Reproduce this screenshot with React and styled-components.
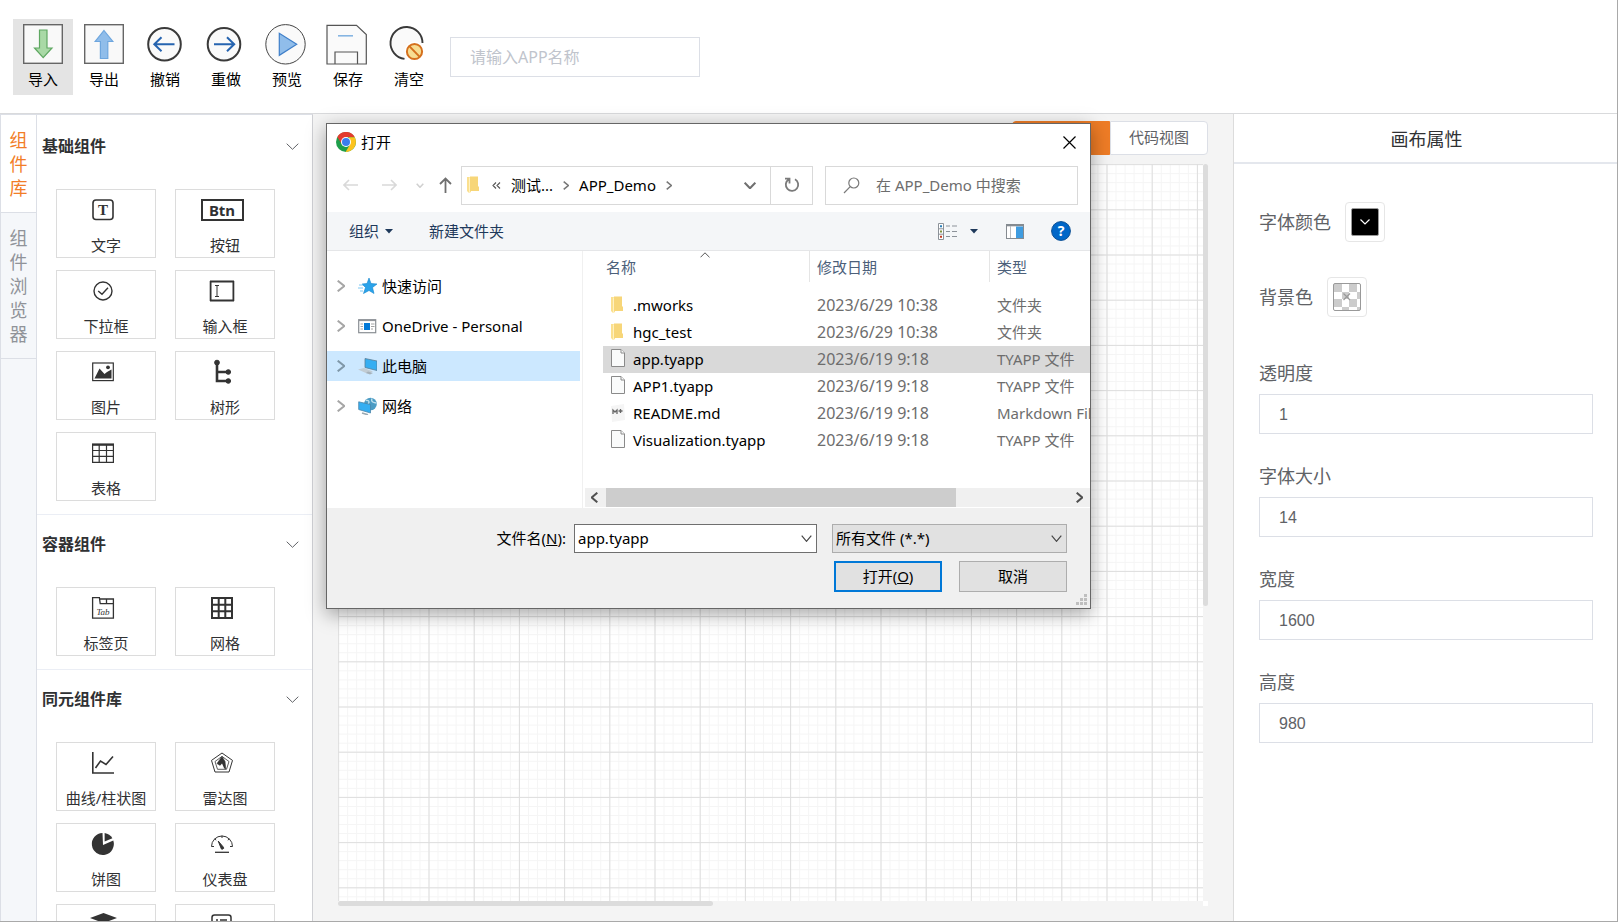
import React from "react";
import styled, { createGlobalStyle } from "styled-components";

const GlobalStyle = createGlobalStyle`
  * {
    box-sizing: border-box;
  }
  body {
    margin: 0;
    color: #303133;
    background: #ffffff;
    font-family: "Noto Sans", "Noto Sans CJK SC", sans-serif;
    font-size: 15px;
    line-height: 22px;
  }
  button, input, select {
    margin: 0;
    padding: 0;
    border: 0;
    border-radius: 0;
    background: none;
    color: inherit;
    font: inherit;
    outline: none;
  }
  svg {
    display: block;
    flex: none;
  }
`;

const Page = styled.div`
  display: flex;
  flex-direction: column;
  height: 100vh;
  overflow: hidden;
  border-right: 1px solid #a9a9a9;
  border-bottom: 1px solid #a9a9a9;
`;

/* top bar */
const TopBar = styled.header`
  display: flex;
  align-items: flex-start;
  flex: none;
  height: 114px;
  padding: 19px 13px 0;
  border-bottom: 1px solid #d9dadc;
`;
const Tools = styled.div`
  display: flex;
  gap: 1px;
`;
const ToolButton = styled.button`
  display: flex;
  flex-direction: column;
  align-items: center;
  gap: 2px;
  width: 60px;
  height: 76px;
  padding-top: 3px;
  color: #000000;
  background: ${(p) => (p.$active ? "#e4e4e4" : "transparent")};
`;
const AppName = styled.input`
  width: 250px;
  height: 40px;
  margin: 18px 0 0 11px;
  padding: 0 19px;
  border: 1px solid #dcdfe6;
  font-size: 16px;
  &::placeholder {
    color: #c0c4cc;
    opacity: 1;
  }
`;

const Workspace = styled.div`
  display: flex;
  flex: 1;
  min-height: 0;
`;

/* left side */
const Rail = styled.nav`
  display: flex;
  flex-direction: column;
  flex: none;
  width: 37px;
  border: 1px solid #dcdfe6;
  border-bottom: 0;
  background: #f5f7fa;
`;
const RailTab = styled.button`
  width: 100%;
  padding: 13px 8px 12px;
  border-bottom: 1px solid #dcdfe6;
  background: ${(p) => (p.$active ? "#ffffff" : "transparent")};
  color: ${(p) => (p.$active ? "#f27d27" : "#909399")};
  font-size: 18px;
  line-height: 24px;
`;
const Library = styled.aside`
  flex: none;
  width: 276px;
  padding-top: 2px;
  overflow: hidden;
  border-top: 1px solid #dcdfe6;
  border-right: 1px solid #cfd0d4;
`;
const Section = styled.section`
  padding-bottom: 13px;
  border-bottom: 1px solid #ebeef5;
`;
const SectionTitle = styled.button`
  display: flex;
  align-items: center;
  justify-content: space-between;
  width: 100%;
  height: 60px;
  padding: 0 13px 2px 5px;
  font-size: 16px;
  font-weight: 700;
`;
const Cards = styled.div`
  display: grid;
  grid-template-columns: 100px 100px;
  gap: 12px 19px;
  padding: 12px 19px 0;
`;
const Card = styled.button`
  display: flex;
  flex-direction: column;
  align-items: center;
  gap: 12px;
  height: 69px;
  padding-top: 8px;
  border: 1px solid #dcdcdc;
  white-space: nowrap;
`;
const CardIcon = styled.span`
  display: flex;
  align-items: center;
  justify-content: center;
  height: 24px;
  margin-right: 6px;
`;
const BtnGlyph = styled.span`
  width: 43px;
  height: 22px;
  border: 2px solid #333333;
  font-weight: 700;
  line-height: 18px;
  text-align: center;
`;

/* canvas */
const Stage = styled.main`
  display: flex;
  flex: 1;
  flex-direction: column;
  min-width: 0;
  padding: 7px 25px 15px;
  background: #f4f4f4;
`;
const ViewTabs = styled.div`
  display: flex;
  align-self: flex-end;
`;
const ViewTab = styled.button`
  width: 98px;
  height: 34px;
  padding-bottom: 2px;
  border: 1px solid ${(p) => (p.$active ? "#ee7c26" : "#dcdfe6")};
  border-radius: ${(p) => (p.$active ? "4px 0 0 4px" : "0 4px 4px 0")};
  background: ${(p) => (p.$active ? "#ee7c26" : "#ffffff")};
  color: #606266;
`;
const Board = styled.div`
  display: grid;
  flex: 1;
  grid-template-columns: minmax(0, 1fr) 5px;
  grid-template-rows: minmax(0, 1fr) 5px;
  min-height: 0;
  margin-top: 9px;
`;
const Grid = styled.svg`
  width: 100%;
  height: 100%;
  background: #ffffff;
`;
const Thumb = styled.div`
  width: ${(p) => p.$w};
  height: ${(p) => p.$h};
  border-radius: 3px;
  background: #dcdcdc;
`;
const Corner = styled.div`
  background: #ffffff;
`;

/* right side */
const Props = styled.aside`
  flex: none;
  width: 384px;
  border-left: 1px solid #dcdcdc;
  color: #606266;
  font-size: 18px;
`;
const PropsTitle = styled.h2`
  margin: 0;
  padding: 2px 0 0 2px;
  border-bottom: 2px solid #e4e7ed;
  color: #303133;
  font-size: 18px;
  font-weight: 400;
  line-height: 46px;
  text-align: center;
`;
const PropsForm = styled.form`
  display: flex;
  flex-direction: column;
  padding: 38px 24px 38px 25px;
`;
const ColorRow = styled.div`
  display: flex;
  align-items: center;
  gap: 14px;
  margin-bottom: 35px;
`;
const Swatch = styled.button`
  display: flex;
  align-items: center;
  justify-content: center;
  width: 40px;
  height: 40px;
  border: 1px solid #e6e6e6;
  border-radius: 4px;
`;
const Field = styled.div`
  display: flex;
  flex-direction: column;
  margin: 1px 0 21px;
  line-height: 41px;
`;
const FieldInput = styled.input`
  height: 40px;
  padding: 0 19px;
  border: 1px solid #dcdfe6;
  font-family: "Liberation Sans", sans-serif;
  font-size: 16px;
`;

/* file dialog */
const Dialog = styled.div`
  position: absolute;
  top: 123px;
  left: 326px;
  display: flex;
  flex-direction: column;
  width: 765px;
  border: 1px solid #666666;
  background: #ffffff;
  color: #000000;
  box-shadow: 0 5px 18px rgba(0, 0, 0, 0.36);
`;
const TitleBar = styled.div`
  display: flex;
  align-items: center;
  gap: 5px;
  height: 36px;
  padding: 0 14px 0 9px;
`;
const CloseButton = styled.button`
  margin-left: auto;
`;
const NavBar = styled.div`
  display: flex;
  align-items: center;
  height: 52px;
  padding: 0 12px 2px 16px;
`;
const NavButtons = styled.div`
  display: flex;
  align-items: center;
  width: 118px;
`;
const Address = styled.div`
  display: flex;
  align-items: center;
  flex: 1;
  height: 39px;
  border: 1px solid #d9d9d9;
`;
const Crumbs = styled.div`
  display: flex;
  align-items: center;
  gap: 10px;
  flex: 1;
  padding-left: 4px;
`;
const Refresh = styled.button`
  display: flex;
  align-items: center;
  justify-content: center;
  width: 42px;
  height: 37px;
  margin-left: 14px;
  border-left: 1px solid #d9d9d9;
`;
const Search = styled.label`
  display: flex;
  align-items: center;
  gap: 16px;
  width: 253px;
  height: 39px;
  margin-left: 12px;
  padding: 0 17px;
  border: 1px solid #d9d9d9;
`;
const SearchInput = styled.input`
  flex: 1;
  min-width: 0;
  &::placeholder {
    color: #6d6d6d;
    opacity: 1;
  }
`;
const CommandBar = styled.div`
  display: flex;
  align-items: center;
  height: 39px;
  padding: 0 19px 0 22px;
  border-bottom: 1px solid #e5e6e8;
  background: #f4f6f8;
  color: #1e395b;
`;
const Command = styled.button`
  display: flex;
  align-items: center;
  gap: 6px;
  margin-right: 36px;
`;
const ViewTools = styled.div`
  display: flex;
  align-items: center;
  margin-left: auto;
`;
const IconButton = styled.button`
  display: flex;
  margin-left: ${(p) => p.$gap || 0}px;
`;
const Panes = styled.div`
  display: flex;
  height: 257px;
`;
const Tree = styled.div`
  display: flex;
  flex-direction: column;
  gap: 10px;
  width: 256px;
  padding: 20px 2px 0 0;
  border-right: 1px solid #f0f0f0;
`;
const TreeItem = styled.button`
  display: flex;
  align-items: center;
  height: 30px;
  padding-left: 10px;
  background: ${(p) => (p.$active ? "#cce8ff" : "transparent")};
  svg + svg {
    margin: 0 5px 0 13px;
  }
`;
const Files = styled.div`
  display: flex;
  flex: 1;
  flex-direction: column;
  min-width: 0;
  padding-left: 2px;
`;
const TableClip = styled.div`
  position: relative;
  flex: 1;
  overflow: hidden;
  padding-left: 18px;
`;
const SortMark = styled.svg`
  position: absolute;
  top: 1px;
  left: 115px;
`;
const Table = styled.table`
  width: 100%;
  border-collapse: separate;
  border-spacing: 0;
  table-layout: fixed;
  white-space: nowrap;
  tbody::before {
    content: "";
    display: block;
    height: 10px;
  }
`;
const Th = styled.th`
  width: ${(p) => p.$w};
  height: 31px;
  padding: 1px 0 0 ${(p) => p.$pad}px;
  border-right: ${(p) => (p.$last ? 0 : 1)}px solid #e5e5e5;
  color: #4c607a;
  font-weight: 400;
  text-align: left;
`;
const Row = styled.tr`
  background: ${(p) => (p.$active ? "#d9d9d9" : "transparent")};
`;
const Td = styled.td`
  height: 27px;
  padding: 0 0 2px 7px;
  color: ${(p) => (p.$name ? "#000000" : "#6d6d6d")};
  font-size: ${(p) => (p.$date ? 16 : 15)}px;
`;
const FileName = styled.span`
  display: flex;
  align-items: center;
  gap: 7px;
`;
const HScroll = styled.div`
  display: flex;
  align-items: center;
  height: 20px;
  border-bottom: 1px solid #ffffff;
  background: #f0f0f0;
`;
const HThumb = styled.div`
  width: 350px;
  height: 19px;
  margin: 0 auto 0 8px;
  background: #cdcdcd;
`;
const Footer = styled.div`
  display: flex;
  flex-direction: column;
  gap: 8px;
  height: 100px;
  padding: 16px 23px 0 0;
  background: #f0f0f0;
`;
const FooterRow = styled.div`
  display: flex;
  align-items: center;
  justify-content: flex-end;
  gap: ${(p) => p.$gap}px;
  label {
    padding-bottom: 2px;
  }
`;
const Combo = styled.div`
  display: flex;
  align-items: center;
  width: ${(p) => p.$w}px;
  height: 29px;
  padding-right: 4px;
  border: 1px solid ${(p) => (p.$grey ? "#adadad" : "#6f6f6f")};
  background: ${(p) => (p.$grey ? "#e1e1e1" : "#ffffff")};
  input, select {
    flex: 1;
    min-width: 0;
    height: 27px;
    padding: 0 0 2px 3px;
    appearance: none;
  }
`;
const DialogButton = styled.button`
  width: 108px;
  height: 31px;
  padding-bottom: 2px;
  border: ${(p) => (p.$primary ? "2px solid #0078d7" : "1px solid #adadad")};
  background: #e1e1e1;
`;
const Grip = styled.svg`
  position: absolute;
  right: 2px;
  bottom: 2px;
`;

const Chevron = ({ w = 12, h = 7, color = "#606266", stroke = 1, dir = "down" }) => {
  const d = {
    down: `M.7 .7L${w / 2} ${h - 0.7}L${w - 0.7} .7`,
    up: `M.7 ${h - 0.7}L${w / 2} .7L${w - 0.7} ${h - 0.7}`,
    right: `M.7 .7L${w - 0.7} ${h / 2}L.7 ${h - 0.7}`,
    left: `M${w - 0.7} .7L.7 ${h / 2}L${w - 0.7} ${h - 0.7}`,
  }[dir];
  return (
    <svg width={w} height={h} fill="none" stroke={color} strokeWidth={stroke}>
      <path d={d} />
    </svg>
  );
};

const Triangle = () => (
  <svg width="8" height="5" fill="#1e395b">
    <path d="M0 0H8L4 4.5Z" />
  </svg>
);

const toolIcons = {
  导入: (
    <>
      <rect x="2.7" y="2.7" width="38.6" height="38.6" fill="#f9f9f9" stroke="#666" strokeWidth="1.4" />
      <path d="M18.5 8H26V26H31L22.2 35.7L13.5 26H18.5Z" fill="#a9d9a6" stroke="#5fa862" strokeWidth="1.2" />
    </>
  ),
  导出: (
    <>
      <rect x="2.7" y="2.7" width="38.6" height="38.6" fill="#f9f9f9" stroke="#666" strokeWidth="1.4" />
      <path d="M22 8.5L30.8 19.5H25.8V36.5H18.4V19.5H13.2Z" fill="#90bdea" stroke="#6ea6de" strokeWidth="1.2" />
    </>
  ),
  撤销: (
    <>
      <circle cx="21.5" cy="22.3" r="16.3" fill="#fafafa" stroke="#3a3a3a" strokeWidth="2" />
      <path d="M31.5 22.3H11M18.5 15.3L11.3 22.3L18.5 29.3" fill="none" stroke="#2664b0" strokeWidth="2" />
    </>
  ),
  重做: (
    <>
      <circle cx="20" cy="22.3" r="16.3" fill="#fafafa" stroke="#3a3a3a" strokeWidth="2" />
      <path d="M10 22.3H30.5M23 15.3L30.2 22.3L23 29.3" fill="none" stroke="#2664b0" strokeWidth="2" />
    </>
  ),
  预览: (
    <>
      <circle cx="20.5" cy="22.3" r="19.7" fill="#fafafa" stroke="#444" strokeWidth="1" />
      <path d="M14.3 11.3V33.3L31.7 22.3Z" fill="#90bdea" stroke="#3f7fc9" strokeWidth="1.2" />
    </>
  ),
  保存: (
    <>
      <path d="M1 3.4H30.5L40.3 12.5V42H1Z" fill="#fafafa" stroke="#555" strokeWidth="1.2" />
      <path d="M9 42V30H31.5V42" fill="none" stroke="#555" strokeWidth="1.2" />
      <path d="M12 13.8H27" stroke="#86b5e2" strokeWidth="1.6" />
    </>
  ),
  清空: (
    <>
      <circle cx="19.5" cy="21" r="16" fill="#fafafa" />
      <path d="M35.5 21A16 16 0 1 0 17.5 36.9" fill="none" stroke="#3a3a3a" strokeWidth="1.9" />
      <circle cx="27.5" cy="29.5" r="10" fill="#fff" />
      <circle cx="27.5" cy="29.5" r="7.6" fill="#f7dd92" stroke="#d5701d" strokeWidth="2" />
      <path d="M22.3 24.1L32.7 34.9" stroke="#d5701d" strokeWidth="2" />
    </>
  ),
};

const cardIcons = {
  text: (
    <>
      <rect x="2" y="2" width="20" height="19.5" rx="3" fill="none" stroke="#333" strokeWidth="1.6" />
      <text x="12" y="17" fontFamily="Liberation Serif, serif" fontSize="15" fontWeight="700" textAnchor="middle">T</text>
    </>
  ),
  select: (
    <g fill="none" stroke="#333" strokeWidth="1.4">
      <circle cx="12" cy="12" r="9" />
      <path d="M7.2 12L11 15.3L17 8.8" />
    </g>
  ),
  input: (
    <g fill="none" stroke="#333">
      <path d="M0 2.5H24M0 21.5H24M.6 2V22M23.4 2V22" strokeWidth="1.8" />
      <path d="M5 6.5H9M5 17.5H9M7 6.5V17.5" strokeWidth="1" />
    </g>
  ),
  image: (
    <>
      <rect x="1.7" y="3" width="20.6" height="17.6" fill="none" stroke="#333" strokeWidth="1.2" />
      <path d="M3.5 18.5L8.5 8.5L13.5 14L16 12L20.5 9.5V18.5Z" fill="#333" />
      <circle cx="17" cy="7.3" r="1.9" fill="#333" />
    </>
  ),
  tree: (
    <g fill="#333" stroke="#333">
      <path d="M7 2V21H18M7 12H18" fill="none" strokeWidth="2.6" />
      <circle cx="7" cy="2.6" r="2.4" />
      <circle cx="18.3" cy="12" r="2.3" />
      <circle cx="18.3" cy="21" r="2.3" />
    </g>
  ),
  table: (
    <g fill="none" stroke="#333" strokeWidth="1.2">
      <path d="M1 3.6H23" strokeWidth="2.4" />
      <path d="M1.6 3V21.4H22.4V3M1 9.5H23M1 15.4H23M8.2 3V21.4M15.5 3V21.4" />
    </g>
  ),
  tab: (
    <>
      <path d="M1.6 22.2V1.6H8.4L9.2 7.6H22.4V22.2ZM9 3H22.4V7.6M15.5 3V7.6" fill="none" stroke="#333" strokeWidth="1.3" />
      <text x="12" y="18.5" fontFamily="Liberation Serif, serif" fontSize="9" fontStyle="italic" textAnchor="middle">Tab</text>
    </>
  ),
  grid: (
    <path d="M2 2H22V22H2ZM2 8.7H22M2 15.3H22M8.7 2V22M15.3 2V22" fill="none" stroke="#333" strokeWidth="2" />
  ),
  line: (
    <path d="M1.8 1V22H23M4.5 17L9.5 10L15 13.5L22 5.5" fill="none" stroke="#333" strokeWidth="1.6" />
  ),
  radar: (
    <g fill="none" stroke="#333">
      <path d="M12 2L22.5 9.4L19 21H5L1.5 9.4Z" strokeWidth="1" />
      <path d="M12 5.4L19 10.5L16.5 18.3H7.5L5 10.5Z" strokeWidth=".8" />
      <path d="M12 5.5L15 10.5L15.8 18L7 12.5Z" fill="#333" strokeWidth=".6" />
      <path d="M12 12.5L14 17L8.5 16.5Z" fill="#fff" stroke="none" />
    </g>
  ),
  pie: (
    <>
      <path d="M11.5 1A11 11 0 1 0 22.3 8.6L12 13Z" fill="#333" />
      <path d="M13.6 1V9.5L21.4 6.3A11 11 0 0 0 13.6 1Z" fill="#333" />
    </>
  ),
  gauge: (
    <g fill="none" stroke="#333" strokeWidth="1">
      <path d="M1.5 14.5A10.5 10.5 0 1 1 22.5 14.5M1.5 14.5H4M20 14.5H22.5M12 3.7V6M4.6 6.8L6.2 8.2M19.4 6.8L17.8 8.2" />
      <path d="M8.2 9L13.4 15.2A1.3 1.3 0 1 1 11 16Z" fill="#333" />
      <path d="M5 20.3H19" strokeWidth="1.3" />
    </g>
  ),
  layers: <path d="M-1 5L12.5 0L26 5L12.5 10ZM0 10L12.5 15L25 10V13L12.5 18L0 13Z" fill="#333" />,
  list: (
    <g fill="none" stroke="#333" strokeWidth="1.5">
      <rect x="2" y="2" width="19" height="19" rx="2.5" />
      <path d="M6 7H8M10 7H17M6 11H8M10 11H17" />
    </g>
  ),
};

const sections = [
  {
    title: "基础组件",
    cards: [
      ["text", "文字"],
      ["btn", "按钮"],
      ["select", "下拉框"],
      ["input", "输入框"],
      ["image", "图片"],
      ["tree", "树形"],
      ["table", "表格"],
    ],
  },
  {
    title: "容器组件",
    cards: [
      ["tab", "标签页"],
      ["grid", "网格"],
    ],
  },
  {
    title: "同元组件库",
    cards: [
      ["line", "曲线/柱状图"],
      ["radar", "雷达图"],
      ["pie", "饼图"],
      ["gauge", "仪表盘"],
      ["layers", ""],
      ["list", ""],
    ],
  },
];

const fields = [
  { id: "opacity", label: "透明度", value: "1" },
  { id: "fontSize", label: "字体大小", value: "14" },
  { id: "width", label: "宽度", value: "1600" },
  { id: "height", label: "高度", value: "980" },
];

const files = [
  { name: ".mworks", date: "2023/6/29 10:38", type: "文件夹", icon: "folder" },
  { name: "hgc_test", date: "2023/6/29 10:38", type: "文件夹", icon: "folder" },
  { name: "app.tyapp", date: "2023/6/19 9:18", type: "TYAPP 文件", icon: "file", active: true },
  { name: "APP1.tyapp", date: "2023/6/19 9:18", type: "TYAPP 文件", icon: "file" },
  { name: "README.md", date: "2023/6/19 9:18", type: "Markdown File", icon: "md" },
  { name: "Visualization.tyapp", date: "2023/6/19 9:18", type: "TYAPP 文件", icon: "file" },
];

const fileIcons = {
  folder: (
    <svg width="16" height="20">
      <path d="M1 2H5V17L3 18L1 16Z" fill="#fbe08f" />
      <path d="M4 1.5H12V11L13 12V16H4Z" fill="#f7d679" />
      <path d="M4 2V18L3 17.5V3Z" fill="#fff1c0" />
    </svg>
  ),
  file: (
    <svg width="16" height="20" fill="#fafbfb" stroke="#8a8a8a">
      <path d="M1.5 .5H11L14.5 4V17.5H1.5Z" />
      <path d="M11 .5V4H14.5" />
    </svg>
  ),
  md: (
    <svg width="16" height="20">
      <path d="M1 3L14 1L15 17L2 19Z" fill="#f5f5f5" />
      <path d="M3 11V7L5 9L7 7V11M10.5 6V10M8.5 8H12.5" fill="none" stroke="#666" strokeWidth="1.3" />
    </svg>
  ),
};

const places = [
  {
    name: "快速访问",
    icon: (
      <>
        <path d="M11 1L13 6.5L19 7L14.5 10.5L16 16.5L11 13.5L5.5 16.5L7.5 10.5L4 7L9 6.5Z" fill="#2aa3ea" stroke="#1285cc" strokeWidth=".6" />
        <path d="M1 8H5M0 11H5M2 14H5" stroke="#7cc8f4" />
      </>
    ),
  },
  {
    name: "OneDrive - Personal",
    icon: (
      <>
        <rect x=".7" y="2.7" width="17" height="13" fill="#fff" stroke="#8a8f94" strokeWidth="1.2" />
        <path d="M1 3.6H18" stroke="#8a8f94" />
        <rect x="6" y="6" width="6" height="7" fill="#0078d7" />
        <path d="M2.5 7H5M2.5 9.5H5M2.5 12H5M13 7H16.5M13 9.5H16.5M13 12H15" stroke="#999" strokeWidth=".9" />
      </>
    ),
  },
  {
    name: "此电脑",
    active: true,
    icon: (
      <>
        <path d="M7 1.5L19 4V13.5L7 10.5Z" fill="#35aef2" stroke="#5c7e96" strokeWidth=".8" />
        <path d="M0 12.5L6 11L15 14.5L9 16.5Z" fill="#c2ccd3" />
        <path d="M10 14.5L15 16L12 17.5L8 16Z" fill="#a5b1b9" />
      </>
    ),
  },
  {
    name: "网络",
    icon: (
      <>
        <circle cx="12.5" cy="7" r="6.3" fill="#4c9cc4" />
        <path d="M8 3.5C11 3 12 5 10 7M14 1.5C12.5 5 16 6 18.5 6" fill="none" stroke="#bfe0ee" strokeWidth="1.3" />
        <path d="M.7 4.8L12.5 7.5V16L.7 12.5Z" fill="#35aef2" stroke="#4d86aa" strokeWidth=".8" />
        <path d="M4 16L10 17.8" stroke="#9aa9b2" strokeWidth="1.6" />
      </>
    ),
  },
];

const lines = (count, step) =>
  Array.from({ length: count }, (_, i) => {
    const p = (0.6 + i * step).toFixed(2);
    return `M${p} 0V3000M0 ${p}H3000`;
  }).join("");

const ChromeLogo = () => (
  <svg width="20" height="20" viewBox="0 0 20 20">
    <circle cx="10" cy="10" r="10" fill="#1e9e4a" />
    <path d="M1.3 5A10 10 0 0 1 18.7 5H10L6 12.5Z" fill="#e33b2e" />
    <path d="M18.7 5.3A10 10 0 0 1 9.6 20L14 12.4L13 5.3Z" fill="#fcc31e" />
    <circle cx="10" cy="10" r="5" fill="#fff" />
    <circle cx="10" cy="10" r="4" fill="#3b7ded" />
  </svg>
);

const OpenDialog = () => (
  <Dialog role="dialog" aria-label="打开">
    <TitleBar>
      <ChromeLogo />
      <span>打开</span>
      <CloseButton aria-label="关闭">
        <svg width="13" height="13" stroke="#000" strokeWidth="1.2">
          <path d="M.5 .5L12.5 12.5M12.5 .5L.5 12.5" />
        </svg>
      </CloseButton>
    </TitleBar>
    <NavBar>
      <NavButtons>
        <IconButton aria-label="后退">
          <svg width="15" height="12" fill="none" stroke="#d9d9d9" strokeWidth="1.6">
            <path d="M15 6H1M6 1L1 6L6 11" />
          </svg>
        </IconButton>
        <IconButton $gap={24} aria-label="前进">
          <svg width="15" height="12" fill="none" stroke="#d9d9d9" strokeWidth="1.6">
            <path d="M0 6H14M9 1L14 6L9 11" />
          </svg>
        </IconButton>
        <IconButton $gap={19} aria-label="最近位置">
          <Chevron w={8} h={5} color="#d0d0d0" stroke={1.5} />
        </IconButton>
        <IconButton $gap={15} aria-label="上移">
          <svg width="13" height="16" fill="none" stroke="#6f6f6f" strokeWidth="1.8">
            <path d="M6.5 16V1.5M1 7L6.5 1.5L12 7" />
          </svg>
        </IconButton>
      </NavButtons>
      <Address>
        <Crumbs>
          {fileIcons.folder}
          <svg width="9" height="7" fill="none" stroke="#555" strokeWidth="1.1">
            <path d="M4 .5L1 3.5L4 6.5M8 .5L5 3.5L8 6.5" />
          </svg>
          <span>测试...</span>
          <Chevron w={6} h={9} dir="right" color="#777" stroke={1.5} />
          <span>APP_Demo</span>
          <Chevron w={6} h={9} dir="right" color="#777" stroke={1.5} />
        </Crumbs>
        <Chevron w={12} h={7} color="#6f6f6f" stroke={2} />
        <Refresh aria-label="刷新">
          <svg width="16" height="16" fill="none" stroke="#7a7a7a" strokeWidth="1.8">
            <path d="M11 2.2A6.2 6.2 0 1 1 4.5 2.5M1 1.7H5.5V6.5" />
          </svg>
        </Refresh>
      </Address>
      <Search>
        <svg width="17" height="17" fill="none" stroke="#7a7a7a" strokeWidth="1.2">
          <circle cx="10.8" cy="6" r="5" />
          <path d="M7.2 9.6L1 16" />
        </svg>
        <SearchInput placeholder="在 APP_Demo 中搜索" />
      </Search>
    </NavBar>
    <CommandBar>
      <Command>组织 <Triangle /></Command>
      <Command>新建文件夹</Command>
      <ViewTools>
        <IconButton aria-label="更改视图">
          <svg width="19" height="17" fill="#fff" stroke="#8c9299">
            <path d="M.5 .5H5.5V16.5H.5ZM.5 5.8H5.5M.5 11.2H5.5" />
            <path d="M8 3H12M14 3H19M8 8.5H12M14 8.5H19M8 13.5H12M14 13.5H19" />
            <path d="M2 3.2H4" stroke="#2b7fb8" strokeWidth="2" />
            <path d="M2 8.5H4" stroke="#7d8f3c" strokeWidth="2" />
            <path d="M2 13.8H4" stroke="#c23b22" strokeWidth="2" />
          </svg>
        </IconButton>
        <IconButton $gap={13} aria-label="更多选项">
          <Triangle />
        </IconButton>
        <IconButton $gap={28} aria-label="预览窗格">
          <svg width="18" height="15">
            <rect x=".5" y=".5" width="17" height="14" fill="#fff" stroke="#858b91" />
            <path d="M0 1.3H18" stroke="#858b91" strokeWidth="2" />
            <path d="M4.5 2V14" stroke="#b9bdc1" />
            <rect x="10" y="2.5" width="7" height="11.5" fill="#3f9ce0" />
          </svg>
        </IconButton>
        <IconButton $gap={27} aria-label="帮助">
          <svg width="20" height="20">
            <circle cx="10" cy="10" r="9.4" fill="#0067c8" stroke="#0b4f93" />
            <text x="10" y="15" fill="#fff" fontSize="14" fontWeight="700" textAnchor="middle">?</text>
          </svg>
        </IconButton>
      </ViewTools>
    </CommandBar>
    <Panes>
      <Tree>
        {places.map((p) => (
          <TreeItem key={p.name} $active={p.active}>
            <Chevron w={8} h={12} dir="right" color={p.active ? "#7f97a8" : "#a6a6a6"} stroke={2} />
            <svg width="19" height="18">{p.icon}</svg>
            {p.name}
          </TreeItem>
        ))}
      </Tree>
      <Files>
        <TableClip>
          <SortMark width="10" height="6" fill="none" stroke="#555">
            <path d="M.5 5.3L5 .8L9.5 5.3" />
          </SortMark>
          <Table>
            <thead>
              <tr>
                <Th $w="207px" $pad={3}>名称</Th>
                <Th $w="180px" $pad={7}>修改日期</Th>
                <Th $w="auto" $pad={7} $last>类型</Th>
              </tr>
            </thead>
            <tbody>
              {files.map((f) => (
                <Row key={f.name} $active={f.active}>
                  <Td $name>
                    <FileName>
                      {fileIcons[f.icon]}
                      {f.name}
                    </FileName>
                  </Td>
                  <Td $date>{f.date}</Td>
                  <Td>{f.type}</Td>
                </Row>
              ))}
            </tbody>
          </Table>
        </TableClip>
        <HScroll>
          <IconButton $gap={6} aria-label="向左滚动">
            <Chevron w={7} h={11} dir="left" color="#505050" stroke={2} />
          </IconButton>
          <HThumb />
          <IconButton aria-label="向右滚动">
            <Chevron w={7} h={11} dir="right" color="#505050" stroke={2} />
          </IconButton>
          <IconButton as="span" $gap={7} />
        </HScroll>
      </Files>
    </Panes>
    <Footer>
      <FooterRow $gap={15}>
        <FooterRow $gap={8}>
          <label htmlFor="fileName">文件名(<u>N</u>):</label>
          <Combo $w={243}>
            <input id="fileName" defaultValue="app.tyapp" />
            <Chevron w={11} h={7} color="#444" stroke={1.2} />
          </Combo>
        </FooterRow>
        <Combo $w={235} $grey>
          <select aria-label="文件类型">
            <option>所有文件 (*.*)</option>
          </select>
          <Chevron w={11} h={7} color="#444" stroke={1.2} />
        </Combo>
      </FooterRow>
      <FooterRow $gap={17}>
        <DialogButton $primary>打开(<u>O</u>)</DialogButton>
        <DialogButton>取消</DialogButton>
      </FooterRow>
    </Footer>
    <Grip width="12" height="12" fill="#bfbfbf">
      <path d="M8 0h3v3h-3zM8 4h3v3h-3zM8 8h3v3h-3zM4 4h3v3h-3zM4 8h3v3h-3zM0 8h3v3h-3z" />
    </Grip>
  </Dialog>
);

const App = () => {
  return (
    <Page>
      <GlobalStyle />
      <TopBar>
        <Tools>
          {Object.keys(toolIcons).map((name) => (
            <ToolButton key={name} $active={name === "导入"}>
              <svg width="44" height="44">{toolIcons[name]}</svg>
              {name}
            </ToolButton>
          ))}
        </Tools>
        <AppName placeholder="请输入APP名称" aria-label="APP名称" />
      </TopBar>
      <Workspace>
        <Rail>
          <RailTab $active>组件库</RailTab>
          <RailTab>组件浏览器</RailTab>
        </Rail>
        <Library>
          {sections.map((s) => (
            <Section key={s.title}>
              <SectionTitle>
                {s.title}
                <Chevron w={13} h={7} />
              </SectionTitle>
              <Cards>
                {s.cards.map(([icon, label]) => (
                  <Card key={icon}>
                    <CardIcon>
                      {icon === "btn" ? (
                        <BtnGlyph>Btn</BtnGlyph>
                      ) : (
                        <svg width="24" height="24" overflow="visible" fill="#333">{cardIcons[icon]}</svg>
                      )}
                    </CardIcon>
                    {label}
                  </Card>
                ))}
              </Cards>
            </Section>
          ))}
        </Library>
        <Stage>
          <ViewTabs>
            <ViewTab $active aria-label="画布视图" />
            <ViewTab>代码视图</ViewTab>
          </ViewTabs>
          <Board>
            <Grid fill="none">
              <path d={lines(300, 9.04)} stroke="#f5f5f5" />
              <path d={lines(60, 45.2)} stroke="#dedede" />
            </Grid>
            <Thumb $w="5px" $h="60%" />
            <Thumb $w="375px" $h="5px" />
            <Corner />
          </Board>
        </Stage>
        <Props>
          <PropsTitle>画布属性</PropsTitle>
          <PropsForm>
            <ColorRow>
              <span>字体颜色</span>
              <Swatch type="button" aria-label="字体颜色">
                <svg width="28" height="28">
                  <rect x=".5" y=".5" width="27" height="27" rx="1.5" fill="#000" stroke="#999" />
                  <path d="M9.5 11.5L14 16L18.5 11.5" fill="none" stroke="#fff" strokeWidth="1.2" />
                </svg>
              </Swatch>
            </ColorRow>
            <ColorRow>
              <span>背景色</span>
              <Swatch type="button" aria-label="背景色">
                <svg width="28" height="28">
                  <rect x=".5" y=".5" width="27" height="27" rx="1.5" fill="#fff" />
                  <path
                    d="M1 1h8v8h-8zM16 1h8v8h-8zM9 9h7v7h-7zM24 9h3v7h-3zM1 16h8v8h-8zM16 16h8v8h-8zM9 24h7v3h-7zM24 24h3v3h-3z"
                    fill="#ccc"
                  />
                  <rect x=".5" y=".5" width="27" height="27" rx="1.5" fill="none" stroke="#999" />
                  <path d="M10.5 10.5L17 17M17 10.5L10.5 17" stroke="#999" strokeWidth="1.2" />
                </svg>
              </Swatch>
            </ColorRow>
            {fields.map((f) => (
              <Field key={f.id}>
                <label htmlFor={f.id}>{f.label}</label>
                <FieldInput id={f.id} defaultValue={f.value} />
              </Field>
            ))}
          </PropsForm>
        </Props>
      </Workspace>
      <OpenDialog />
    </Page>
  );
};

export default App;
